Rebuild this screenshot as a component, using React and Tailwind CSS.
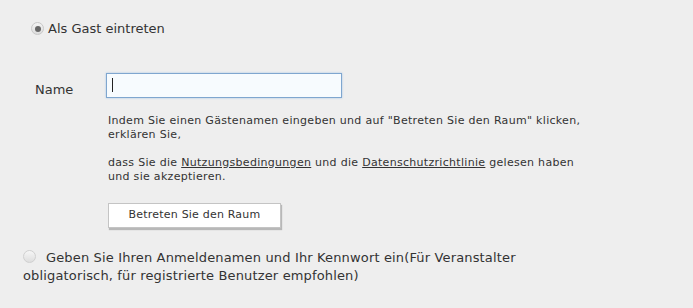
export default function App() {
  return (
    <div className="w-[693px] h-[308px] bg-[#eeeeee] text-[#333333] overflow-hidden" style={{ fontFamily: '"DejaVu Sans", Verdana, sans-serif' }}>
      <div className="pt-[19px] pl-[31px] flex items-center gap-[4px] text-[13px]">
        <span className="w-[13px] h-[13px] rounded-full border border-[#c8c8c8] bg-gradient-to-b from-[#f4f4f4] to-[#dcdcdc] flex items-center justify-center">
          <span className="w-[6px] h-[6px] rounded-full bg-[#666]"></span>
        </span>
        <span>Als Gast eintreten</span>
      </div>

      <div className="mt-[34px] flex items-center">
        <span className="ml-[35px] w-[71px] text-[13px] leading-[17px] pt-[8px]">Name</span>
        <div className="w-[236px] h-[25px] border border-[#7fa6cf] bg-[#f7fbfe] shadow-[0_0_2px_#a9c7e6] flex items-center pl-[5px]">
          <span className="w-[1px] h-[14px] bg-[#222]"></span>
        </div>
      </div>

      <div className="ml-[108px] mt-[16px] text-[11px] leading-[14px] tracking-[0.3px]">
        <p>Indem Sie einen Gästenamen eingeben und auf "Betreten Sie den Raum" klicken,<br />erklären Sie,</p>
        <p className="mt-[14px]">dass Sie die <span className="underline">Nutzungsbedingungen</span> und die <span className="underline">Datenschutzrichtlinie</span> gelesen haben<br />und sie akzeptieren.</p>
        <button className="mt-[19px] w-[173px] h-[25px] bg-white border border-[#c4c4c4] shadow-[1px_2px_1px_#b8b8b8] text-[11px] tracking-[0.2px] text-[#333]">Betreten Sie den Raum</button>
      </div>

      <div className="mt-[21px] ml-[23px] w-[520px] text-[13px] leading-[18px] tracking-[0.15px]">
        <span className="inline-block align-[-1px] w-[13px] h-[13px] rounded-full border border-[#d0d0d0] bg-gradient-to-b from-[#f6f6f6] to-[#dedede] mr-[10px]"></span>
        Geben Sie Ihren Anmeldenamen und Ihr Kennwort ein(Für Veranstalter obligatorisch, für registrierte Benutzer empfohlen)
      </div>
    </div>
  );
}
